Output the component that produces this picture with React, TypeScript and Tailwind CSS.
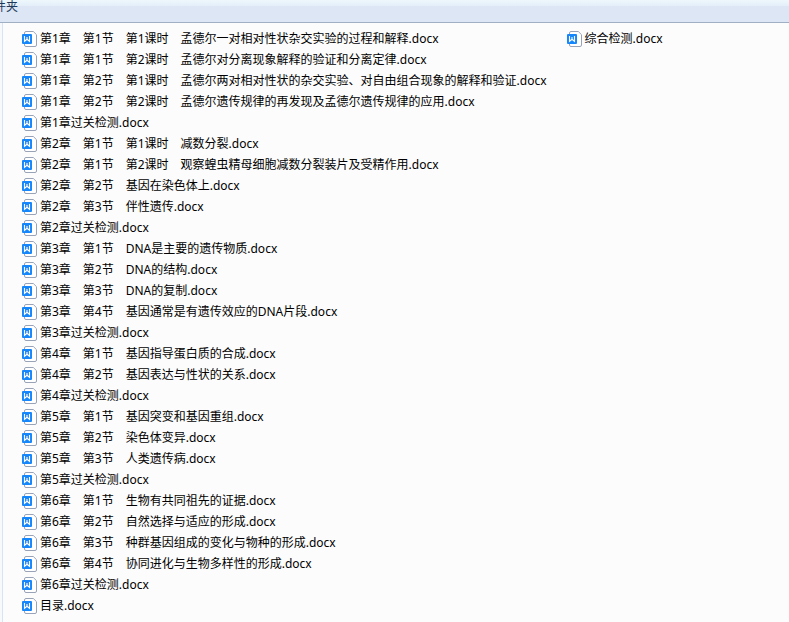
const lessonFiles = [
  "第1章　第1节　第1课时　孟德尔一对相对性状杂交实验的过程和解释.docx",
  "第1章　第1节　第2课时　孟德尔对分离现象解释的验证和分离定律.docx",
  "第1章　第2节　第1课时　孟德尔两对相对性状的杂交实验、对自由组合现象的解释和验证.docx",
  "第1章　第2节　第2课时　孟德尔遗传规律的再发现及孟德尔遗传规律的应用.docx",
  "第1章过关检测.docx",
  "第2章　第1节　第1课时　减数分裂.docx",
  "第2章　第1节　第2课时　观察蝗虫精母细胞减数分裂装片及受精作用.docx",
  "第2章　第2节　基因在染色体上.docx",
  "第2章　第3节　伴性遗传.docx",
  "第2章过关检测.docx",
  "第3章　第1节　DNA是主要的遗传物质.docx",
  "第3章　第2节　DNA的结构.docx",
  "第3章　第3节　DNA的复制.docx",
  "第3章　第4节　基因通常是有遗传效应的DNA片段.docx",
  "第3章过关检测.docx",
  "第4章　第1节　基因指导蛋白质的合成.docx",
  "第4章　第2节　基因表达与性状的关系.docx",
  "第4章过关检测.docx",
  "第5章　第1节　基因突变和基因重组.docx",
  "第5章　第2节　染色体变异.docx",
  "第5章　第3节　人类遗传病.docx",
  "第5章过关检测.docx",
  "第6章　第1节　生物有共同祖先的证据.docx",
  "第6章　第2节　自然选择与适应的形成.docx",
  "第6章　第3节　种群基因组成的变化与物种的形成.docx",
  "第6章　第4节　协同进化与生物多样性的形成.docx",
  "第6章过关检测.docx",
  "目录.docx",
];

const columns = [lessonFiles, ["综合检测.docx"]];

function DocIcon() {
  return (
    <svg className="w-4 h-4 shrink-0" viewBox="0 0 16 16" aria-hidden="true">
      <path
        d="M2.5 2Q2.5.5 4 .5H11.3L14.5 3.7V14Q14.5 15.5 13 15.5H4Q2.5 15.5 2.5 14Z"
        fill="#fff"
        stroke="#98a3b8"
      />
      <rect y="3" width="10" height="10" rx="1" fill="#1687fb" />
      <path d="M2.5 5V10.3L5 8.3L7.5 10.3V5M5 6V8.3" fill="none" stroke="#fff" strokeWidth="1.1" />
    </svg>
  );
}

function FileItem({ name }: { name: string }) {
  return (
    <li>
      <a href="#" className="flex items-center gap-0.5 h-[21px] whitespace-nowrap cursor-default">
        <DocIcon />
        <span>{name}</span>
      </a>
    </li>
  );
}

export default function App() {
  return (
    <div className="min-h-screen flex flex-col overflow-hidden bg-[#fcfcfc] text-xs text-black font-['Noto_Sans','Noto_Sans_CJK_SC',sans-serif]">
      <header className="h-[23px] border-b border-[#a0afc3] bg-linear-to-b from-[#edf7fc] from-0% via-[#e5eff9] via-25% to-[#dce6f4] to-30%">
        <button className="block -ml-1.5 leading-[14px] text-[#1e395b]">件夹</button>
      </header>

      <main className="flex-1 flex">
        <div className="w-[3px] border-r border-[#d6e5f5] bg-[#f8f9fb]" />
        <div className="flex items-start gap-5 pl-[19px] pt-[5px]">
          {columns.map((files, i) => (
            <ul key={i}>
              {files.map(name => (
                <FileItem key={name} name={name} />
              ))}
            </ul>
          ))}
        </div>
      </main>
    </div>
  );
}
